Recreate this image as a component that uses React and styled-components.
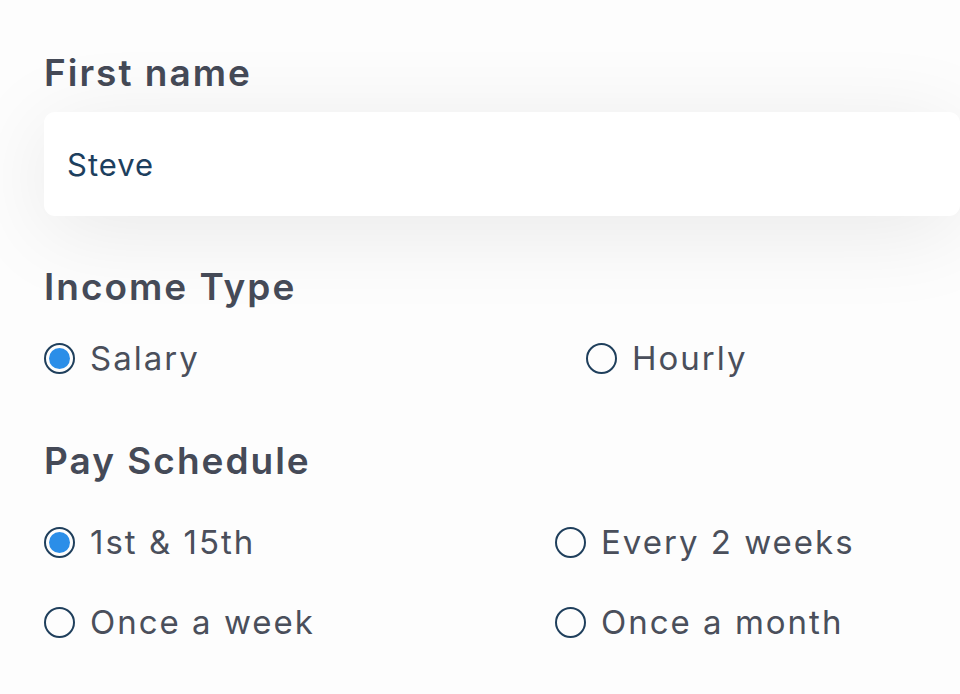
import styled, { createGlobalStyle } from "styled-components";

const GlobalStyle = createGlobalStyle`
  html, body {
    margin: 0;
    padding: 0;
    background: #fdfdfd;
    overflow: hidden;
  }
  body {
    font-family: Inter, "Noto Sans", sans-serif;
  }
`;

const Page = styled.div`
  width: 960px;
  height: 694px;
  box-sizing: border-box;
  padding: 48px 0 0 44px;
  background: #fdfdfd;
  display: flex;
  flex-direction: column;
`;

const Label = styled.div`
  height: 50px;
  line-height: 50px;
  font-size: 37px;
  font-weight: 600;
  color: #454a57;
  margin-top: ${({top}) => top}px;
  margin-bottom: ${({bottom}) => bottom}px;
  letter-spacing: 2px;
`;

const Input = styled.div`
  height: 104px;
  box-sizing: border-box;
  padding-left: 23px;
  display: flex;
  align-items: center;
  background: #ffffff;
  border-radius: 11px;
  box-shadow: 0 14px 90px rgba(0, 0, 0, 0.085);
  font-size: 31px;
  letter-spacing: 1px;
  color: #1d3f5e;
`;

const Options = styled.div`
  display: grid;
  grid-template-columns: ${({first}) => first}px 1fr;
  row-gap: 30px;
`;

const Option = styled.label`
  height: 50px;
  display: flex;
  align-items: center;
  gap: 15px;
  font-size: 33px;
  letter-spacing: 2px;
  color: #4a4f5b;
`;

const Radio = styled.span`
  width: 31px;
  height: 31px;
  box-sizing: border-box;
  border-radius: 50%;
  border: 2px solid #1f3f5c;
  display: flex;
  align-items: center;
  justify-content: center;
  flex-shrink: 0;

  &::after {
    content: "";
    width: 21px;
    height: 21px;
    border-radius: 50%;
    background: ${({checked}) => (checked ? "#2b8ee8" : "transparent")};
  }
`;

function RadioOption({checked, children}) {
  return (
    <Option>
      <Radio checked={checked} />
      {children}
    </Option>
  );
}

export default function App() {
  return (
    <>
      <GlobalStyle />
      <Page>
        <Label bottom={14}>First name</Label>
        <Input>Steve</Input>

        <Label top={46} bottom={21}>Income Type</Label>
        <Options first={542}>
          <RadioOption checked>Salary</RadioOption>
          <RadioOption>Hourly</RadioOption>
        </Options>

        <Label top={53} bottom={31}>Pay Schedule</Label>
        <Options first={511}>
          <RadioOption checked>1st &amp; 15th</RadioOption>
          <RadioOption>Every 2 weeks</RadioOption>
          <RadioOption>Once a week</RadioOption>
          <RadioOption>Once a month</RadioOption>
        </Options>
      </Page>
    </>
  );
}
